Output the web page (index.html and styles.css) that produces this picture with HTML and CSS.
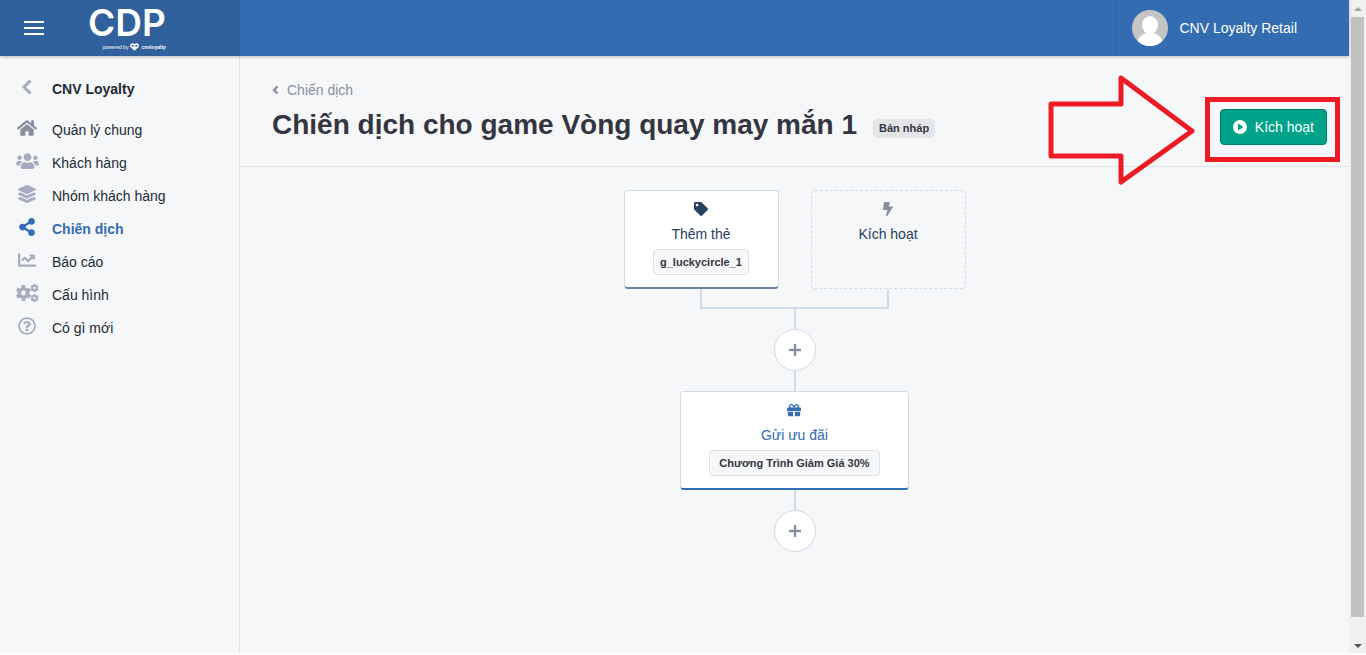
FILE: index.html
```html
<!DOCTYPE html>
<html lang="vi">
<head>
    <meta charset="UTF-8">
    <meta name="viewport" content="width=device-width, initial-scale=1.0">
    <title>Chiến dịch cho game Vòng quay may mắn 1</title>
    <link rel="stylesheet" href="styles.css">
</head>
<body>
    <div class="window">
        <div class="app">
            <header class="topbar">
                <div class="topbar-brand">
                    <button type="button" class="menu-toggle" aria-label="Menu">
                        <svg width="20" height="14" viewBox="0 0 20 14"><path d="M0 0h20v2H0zM0 6h20v2H0zM0 12h20v2H0z"/></svg>
                    </button>
                    <a href="#" class="logo">
                        <span class="logo-name">CDP</span>
                        <span class="logo-tagline">powered by
                            <svg width="9" height="8" viewBox="0 0 16 14" aria-hidden="true"><path d="M8 12 2.500 7C-.5 3.500 4 -.5 8 4c4-4.500 8.500-.5 5.500 3L8 12zM5 6l3 3 3-3" fill="none" stroke="#fff" stroke-width="2.600"/></svg>
                            <b>cnvloyalty</b>
                        </span>
                    </a>
                </div>
                <a href="#" class="account">
                    <svg class="avatar" width="36" height="36" viewBox="0 0 36 36" aria-hidden="true">
                        <clipPath id="avatar-clip"><circle cx="18" cy="18" r="18"/></clipPath>
                        <g clip-path="url(#avatar-clip)">
                            <path fill="#c5c5c5" d="M0 0h36v36H0z"/>
                            <ellipse cx="18" cy="15" rx="8" ry="9"/>
                            <path d="M5 36c0-8 4-11 9-13h8c5 2 9 5 9 13z"/>
                        </g>
                    </svg>
                    <span>CNV Loyalty Retail</span>
                </a>
            </header>

            <div class="body">
                <nav class="sidebar">
                    <a href="#" class="sidebar-title">
                        <svg width="10" height="16" viewBox="0 0 10 16"><path d="M8.500 1.500 2 8l6.500 6.500" fill="none" stroke="currentColor" stroke-width="3"/></svg>
                        <span>CNV Loyalty</span>
                    </a>
                    <ul class="menu">
                        <li><a href="#" class="menu-item menu-item-home">
                            <svg width="20" height="18" viewBox="0 0 576 512"><path d="M280.370 148.260L96 300.110V464a16 16 0 0 0 16 16l112.060-.29a16 16 0 0 0 15.920-16V368a16 16 0 0 1 16-16h64a16 16 0 0 1 16 16v95.640a16 16 0 0 0 16 16.050L464 480a16 16 0 0 0 16-16V300L295.670 148.260a12.190 12.190 0 0 0-15.300 0zM571.600 251.470L488 182.560V44.050a12 12 0 0 0-12-12h-56a12 12 0 0 0-12 12v72.610L318.470 43a48 48 0 0 0-61 0L4.340 251.470a12 12 0 0 0-1.600 16.900l25.500 31A12 12 0 0 0 45.150 301l235.220-193.740a12.190 12.190 0 0 1 15.300 0L530.900 301a12 12 0 0 0 16.900-1.600l25.500-31a12 12 0 0 0-1.700-16.930z"/></svg>
                            <span>Quản lý chung</span>
                        </a></li>
                        <li><a href="#" class="menu-item">
                            <svg width="23" height="18" viewBox="0 0 640 512"><path d="M96 224c35.300 0 64-28.700 64-64s-28.700-64-64-64-64 28.700-64 64 28.700 64 64 64zm448 0c35.300 0 64-28.700 64-64s-28.700-64-64-64-64 28.700-64 64 28.700 64 64 64zm32 32h-64c-17.600 0-33.500 7.100-45.100 18.600 40.300 22.100 68.900 62 75.100 109.400h66c17.700 0 32-14.300 32-32v-32c0-35.300-28.700-64-64-64zm-256 0c61.900 0 112-50.100 112-112S381.900 32 320 32 208 82.100 208 144s50.100 112 112 112zm76.800 32h-8.300c-20.800 10-43.900 16-68.500 16s-47.600-6-68.500-16h-8.300C179.600 288 128 339.600 128 403.200V432c0 26.500 21.500 48 48 48h288c26.500 0 48-21.500 48-48v-28.800c0-63.600-51.600-115.200-115.200-115.200zm-223.700-13.400C161.500 263.100 145.600 256 128 256H64c-35.300 0-64 28.700-64 64v32c0 17.700 14.300 32 32 32h65.900c6.300-47.400 34.900-87.300 75.200-109.400z"/></svg>
                            <span>Khách hàng</span>
                        </a></li>
                        <li><a href="#" class="menu-item">
                            <svg width="18" height="18" viewBox="0 0 512 512"><path d="M12.410 148.020l232.940 105.670c6.800 3.090 14.490 3.090 21.290 0l232.940-105.670c16.550-7.510 16.550-32.520 0-40.030L266.650 2.310a25.607 25.607 0 0 0-21.290 0L12.410 107.980c-16.550 7.510-16.550 32.530 0 40.040zm487.180 88.280l-58.090-26.330-161.640 73.270c-7.560 3.430-15.590 5.170-23.860 5.170s-16.290-1.740-23.860-5.170L70.510 209.970l-58.100 26.330c-16.550 7.500-16.550 32.500 0 40l232.940 105.590c6.800 3.080 14.490 3.080 21.290 0L499.590 276.300c16.550-7.500 16.550-32.500 0-40zm0 127.800l-57.870-26.230-161.860 73.370c-7.560 3.430-15.590 5.170-23.860 5.170s-16.290-1.740-23.860-5.170L70.290 337.870 12.410 364.100c-16.550 7.500-16.550 32.500 0 40l232.940 105.590c6.800 3.080 14.490 3.080 21.290 0L499.590 404.100c16.550-7.500 16.550-32.500 0-40z"/></svg>
                            <span>Nhóm khách hàng</span>
                        </a></li>
                        <li><a href="#" class="menu-item menu-item-active" aria-current="page">
                            <svg width="16" height="18" viewBox="0 0 448 512"><path d="M352 320c-22.608 0-43.387 7.819-59.790 20.895l-102.486-64.054a96.551 96.551 0 0 0 0-41.683l102.486-64.054C308.613 184.181 329.392 192 352 192c53.019 0 96-42.981 96-96S405.019 0 352 0s-96 42.981-96 96c0 7.158.79 14.130 2.276 20.841L155.790 180.895C139.387 167.819 118.608 160 96 160c-53.019 0-96 42.981-96 96s42.981 96 96 96c22.608 0 43.387-7.819 59.790-20.895l102.486 64.054A96.301 96.301 0 0 0 256 416c0 53.019 42.981 96 96 96s96-42.981 96-96-42.981-96-96-96z"/></svg>
                            <span>Chiến dịch</span>
                        </a></li>
                        <li><a href="#" class="menu-item">
                            <svg width="18" height="18" viewBox="0 0 512 512"><path d="M496 384H64V80c0-8.840-7.160-16-16-16H16C7.160 64 0 71.160 0 80v336c0 17.670 14.330 32 32 32h464c8.840 0 16-7.160 16-16v-32c0-8.840-7.160-16-16-16zM464 96H345.940c-21.380 0-32.090 25.850-16.970 40.970l32.400 32.400L288 242.750l-73.370-73.370c-12.500-12.500-32.760-12.500-45.250 0l-68.690 68.690c-6.250 6.250-6.250 16.380 0 22.630l22.620 22.620c6.250 6.250 16.380 6.250 22.630 0L192 237.250l73.370 73.370c12.500 12.500 32.760 12.500 45.250 0l96-96 32.400 32.400c15.120 15.120 40.970 4.410 40.970-16.970V112c.01-8.840-7.150-16-15.990-16z"/></svg>
                            <span>Báo cáo</span>
                        </a></li>
                        <li><a href="#" class="menu-item">
                            <svg width="23" height="18" viewBox="0 0 23 18">
                                <g fill="none" stroke="currentColor">
                                    <circle cx="7.500" cy="9" r="4.200" stroke-width="3.600"/>
                                    <path stroke-width="3.800" d="M7.500 1v2.500M7.500 14.500V17M.8 5.100 3 6.400M12 11.600l2.200 1.300M.8 12.900 3 11.600M12 6.400l2.200-1.300"/>
                                    <circle cx="18.500" cy="4" r="2.200" stroke-width="2"/>
                                    <path stroke-width="2" d="M18.500 0v1.500M18.500 6.500V8M15 2l1.300.8M20.700 5.200 22 6M15 6l1.300-.8M20.700 2.800 22 2"/>
                                    <circle cx="18.500" cy="14" r="2.200" stroke-width="2"/>
                                    <path stroke-width="2" d="M18.500 10v1.500M18.500 16.500V18M15 12l1.300.8M20.700 15.200l1.300.8M15 16l1.300-.8M20.700 12.800 22 12"/>
                                </g>
                            </svg>
                            <span>Cấu hình</span>
                        </a></li>
                        <li><a href="#" class="menu-item">
                            <svg width="18" height="18" viewBox="0 0 512 512"><path d="M256 8C119.043 8 8 119.083 8 256c0 136.997 111.043 248 248 248s248-111.003 248-248C504 119.083 392.957 8 256 8zm0 448c-110.532 0-200-89.431-200-200 0-110.495 89.472-200 200-200 110.491 0 200 89.471 200 200 0 110.530-89.431 200-200 200zm107.244-255.200c0 67.052-72.421 68.084-72.421 92.863V300c0 6.627-5.373 12-12 12h-45.647c-6.627 0-12-5.373-12-12v-8.659c0-35.745 27.100-50.034 47.579-61.516 17.561-9.845 28.324-16.541 28.324-29.579 0-17.246-21.999-28.693-39.784-28.693-23.189 0-33.894 10.977-48.942 29.969-4.057 5.120-11.460 6.071-16.666 2.124l-27.824-21.098c-5.107-3.872-6.251-11.066-2.644-16.363C184.846 131.491 214.940 112 261.794 112c49.071 0 101.450 38.304 101.450 88.800zM298 368c0 23.159-18.841 42-42 42s-42-18.841-42-42 18.841-42 42-42 42 18.841 42 42z"/></svg>
                            <span>Có gì mới</span>
                        </a></li>
                    </ul>
                </nav>

                <main class="content">
                    <div class="page-header">
                        <div class="page-heading">
                            <a href="#" class="breadcrumb">
                                <svg width="7" height="10" viewBox="0 0 7 10"><path d="M5.500 1.500 2 5l3.500 3.500" fill="none" stroke="currentColor" stroke-width="2.400"/></svg>
                                <span>Chiến dịch</span>
                            </a>
                            <div class="page-title">
                                <h1>Chiến dịch cho game Vòng quay may mắn 1</h1>
                                <span class="badge">Bản nháp</span>
                            </div>
                        </div>
                        <div class="page-action">
                            <button type="button" class="btn-activate">
                                <svg width="14" height="14" viewBox="0 0 14 14" aria-hidden="true"><circle cx="7" cy="7" r="7" fill="#fff"/><path d="M5 3.500v7L10.500 7z" fill="#00a389"/></svg>
                                Kích hoạt
                            </button>
                            <svg class="callout-arrow" width="148" height="112" viewBox="0 0 148 112" aria-hidden="true"><path d="M4 30h70V4l71 53-71 51V82H4z" fill="none" stroke="#ed1c24" stroke-width="5" stroke-linejoin="round"/></svg>
                            <span class="callout-frame"></span>
                        </div>
                    </div>

                    <div class="flow">
                        <div class="flow-row">
                            <div class="card card-tag">
                                <svg width="14" height="14" viewBox="0 0 512 512"><path d="M0 252.118V48C0 21.490 21.490 0 48 0h204.118a48 48 0 0 1 33.941 14.059l211.882 211.882c18.745 18.745 18.745 49.137 0 67.882L293.823 497.941c-18.745 18.745-49.137 18.745-67.882 0L14.059 286.059A48 48 0 0 1 0 252.118zM112 64c-26.510 0-48 21.490-48 48s21.490 48 48 48 48-21.490 48-48-21.490-48-48-48z"/></svg>
                                <span class="card-name">Thêm thẻ</span>
                                <span class="chip">g_luckycircle_1</span>
                            </div>
                            <div class="card card-empty">
                                <svg width="10" height="14" viewBox="0 0 320 512" preserveAspectRatio="none"><path d="M296 160H180.600l42.600-129.800C227.200 15 215.700 0 200 0H56C44 0 33.800 8.900 32.200 20.800l-32 240C-1.700 275.200 9.500 288 24 288h118.700L96.600 482.500c-3.600 15.200 8 29.500 23.300 29.500 8.400 0 16.400-4.400 20.800-12l176-304c9.300-15.900-2.200-36-20.700-36z"/></svg>
                                <span class="card-name">Kích hoạt</span>
                            </div>
                        </div>
                        <div class="flow-join"></div>
                        <div class="flow-line"></div>
                        <button type="button" class="add-step" aria-label="Thêm">
                            <svg width="12" height="12" viewBox="0 0 12 12"><path d="M5 0h2v5h5v2H7v5H5V7H0V5h5z" stroke="currentColor" stroke-width=".4"/></svg>
                        </button>
                        <div class="flow-line"></div>
                        <div class="card card-gift">
                            <svg width="14" height="14" viewBox="0 0 512 512"><path d="M32 448c0 17.700 14.300 32 32 32h160V320H32v128zm256 32h160c17.700 0 32-14.300 32-32V320H288v160zm192-320h-42.100c6.200-12.100 10.100-25.500 10.100-40 0-48.500-39.500-88-88-88-41.600 0-68.500 21.300-103 68.300-34.500-47-61.400-68.300-103-68.300-48.500 0-88 39.500-88 88 0 14.500 3.800 27.900 10.100 40H32c-17.700 0-32 14.300-32 32v80c0 8.800 7.200 16 16 16h480c8.800 0 16-7.200 16-16v-80c0-17.700-14.300-32-32-32zm-326.100 0c-22.100 0-40-17.900-40-40s17.900-40 40-40c19.900 0 34.600 3.300 86.100 80h-86.100zm206.100 0h-86.100c51.400-76.500 65.700-80 86.100-80 22.100 0 40 17.900 40 40s-17.900 40-40 40z"/></svg>
                            <span class="card-name">Gửi ưu đãi</span>
                            <span class="chip">Chương Trình Giảm Giá 30%</span>
                        </div>
                        <div class="flow-line"></div>
                        <button type="button" class="add-step" aria-label="Thêm">
                            <svg width="12" height="12" viewBox="0 0 12 12"><path d="M5 0h2v5h5v2H7v5H5V7H0V5h5z" stroke="currentColor" stroke-width=".4"/></svg>
                        </button>
                    </div>
                </main>
            </div>
        </div>

        <div class="scrollbar" aria-hidden="true">
            <svg width="17" height="17" viewBox="0 0 17 17"><path fill="#a3a3a3" d="M5 11l4-4 4 4z"/></svg>
            <div class="scrollbar-track"><div class="scrollbar-thumb"></div></div>
            <svg width="17" height="17" viewBox="0 0 17 17"><path fill="#505050" d="M5 8l4 4 4-4z"/></svg>
        </div>
    </div>
</body>
</html>
```
FILE: styles.css
```css
* {
    box-sizing: border-box;
}

body {
    margin: 0;
    font-family: "Liberation Sans", Arial, sans-serif;
    font-size: 14px;
    line-height: 20px;
    color: #212b36;
    background: #fff;
}

a {
    color: inherit;
    text-decoration: none;
}

button {
    padding: 0;
    font: inherit;
    cursor: pointer;
}

svg {
    display: block;
    flex: none;
    fill: currentColor;
}

.window {
    display: flex;
    min-height: 100vh;
    padding-bottom: 2px;
}

.app {
    flex: 1;
    display: flex;
    flex-direction: column;
    background: #f6f7f9;
}

/* Top bar */
.topbar {
    z-index: 1;
    display: flex;
    justify-content: space-between;
    height: 56px;
    color: #fff;
    background: #336cb0;
    box-shadow: 0 1px 3px rgba(0, 0, 0, 0.25);
}

.topbar-brand {
    display: flex;
    align-items: center;
    gap: 44px;
    width: 240px;
    padding: 0 24px;
    background: #30619d;
}

.menu-toggle {
    border: none;
    color: #fff;
    background: none;
}

.logo {
    display: flex;
    flex-direction: column;
    align-items: flex-end;
}

.logo-name {
    font-family: Inter, sans-serif;
    font-size: 37px;
    font-weight: 600;
    line-height: 38px;
}

.logo-tagline {
    display: flex;
    align-items: center;
    gap: 2px;
    font-size: 5px;
    line-height: 10px;
}

.account {
    display: flex;
    align-items: center;
    gap: 12px;
    padding: 0 52px 0 16px;
    border-left: 1px solid #2f619e;
}

/* Sidebar */
.body {
    flex: 1;
    display: flex;
}

.sidebar {
    width: 240px;
    padding: 16px 12px;
    border-right: 1px solid #e3e5e9;
}

.sidebar-title,
.menu-item {
    display: grid;
    grid-template-columns: 30px 1fr;
    align-items: center;
    column-gap: 10px;
    height: 33px;
}

.sidebar-title {
    margin-bottom: 8px;
    font-weight: 700;
}

.sidebar svg {
    justify-self: center;
    margin-bottom: 4px;
    color: #a6abc0;
}

.menu {
    margin: 0;
    padding: 0;
    list-style: none;
}

.sidebar .menu-item-home svg {
    color: #888da0;
}

.menu-item-active {
    font-weight: 700;
    color: #336cb0;
}

.sidebar .menu-item-active svg {
    color: #336cb0;
}

/* Page header */
.content {
    flex: 1;
}

.page-header {
    display: flex;
    align-items: flex-start;
    justify-content: space-between;
    padding: 24px 22px 21px 32px;
    border-bottom: 1px solid #dfe1e6;
}

.breadcrumb {
    display: flex;
    align-items: center;
    gap: 8px;
    color: #8a8fa0;
}

.page-title {
    display: flex;
    align-items: center;
    gap: 16px;
    margin-top: 7px;
}

h1 {
    margin: 0;
    font-size: 28px;
    font-weight: 700;
    line-height: 36px;
    color: #343541;
}

.badge {
    margin-top: 6px;
    padding: 0 6px;
    border-radius: 4px;
    font-size: 11px;
    font-weight: 700;
    line-height: 19px;
    color: #343541;
    background: #e4e5e7;
}

.page-action {
    position: relative;
    margin-top: 29px;
}

.btn-activate {
    display: flex;
    align-items: center;
    gap: 8px;
    height: 36px;
    padding: 0 12px;
    border: 1px solid #00806b;
    border-radius: 4px;
    color: #fff;
    background: #00a389;
}

.callout-frame {
    position: absolute;
    inset: -12px -13px -17px -15px;
    border: 5px solid #ed1c24;
    pointer-events: none;
}

.callout-arrow {
    position: absolute;
    right: 132px;
    top: -35px;
    pointer-events: none;
}

/* Campaign flow */
.flow {
    display: flex;
    flex-direction: column;
    align-items: center;
    padding: 23px 32px;
}

.flow-row {
    display: grid;
    grid-template-columns: 155px 155px;
    gap: 32px;
}

.flow-join {
    width: 189px;
    height: 20px;
    border: 2px solid #d0dcea;
    border-top: none;
}

.flow-line {
    width: 2px;
    height: 20px;
    background: #d0dcea;
}

.card {
    display: flex;
    flex-direction: column;
    align-items: center;
    height: 99px;
    padding: 11px 28px;
    border: 1px solid #d0dcea;
    border-bottom-width: 2px;
    border-radius: 4px;
    background: #fff;
}

.card-name {
    margin: 8px 0 5px;
}

.card-tag {
    border-bottom-color: #6a82a8;
    color: #26405f;
}

.card-empty {
    border: 1px dashed #d0dcea;
    color: #26405f;
    background: none;
}

.card-empty svg {
    color: #8a8fa0;
}

.card-gift {
    border-bottom-color: #336cb0;
    color: #336cb0;
}

.chip {
    padding: 2px 9px;
    border: 1px solid #dfe1e6;
    border-radius: 4px;
    font-size: 11px;
    font-weight: 700;
    color: #343541;
    background: #f6f7f9;
}

.card-tag .chip {
    padding: 2px 6px;
}

.add-step {
    display: flex;
    align-items: center;
    justify-content: center;
    width: 42px;
    height: 42px;
    border: 1px solid #d0dcea;
    border-radius: 50%;
    color: #888da0;
    background: #fff;
}

/* Scrollbar */
.scrollbar {
    display: flex;
    flex-direction: column;
    width: 17px;
    background: #f1f1f1;
}

.scrollbar-track {
    flex: 1;
    padding: 0 2px;
}

.scrollbar-thumb {
    height: 97%;
    background: #c1c1c1;
}
```
